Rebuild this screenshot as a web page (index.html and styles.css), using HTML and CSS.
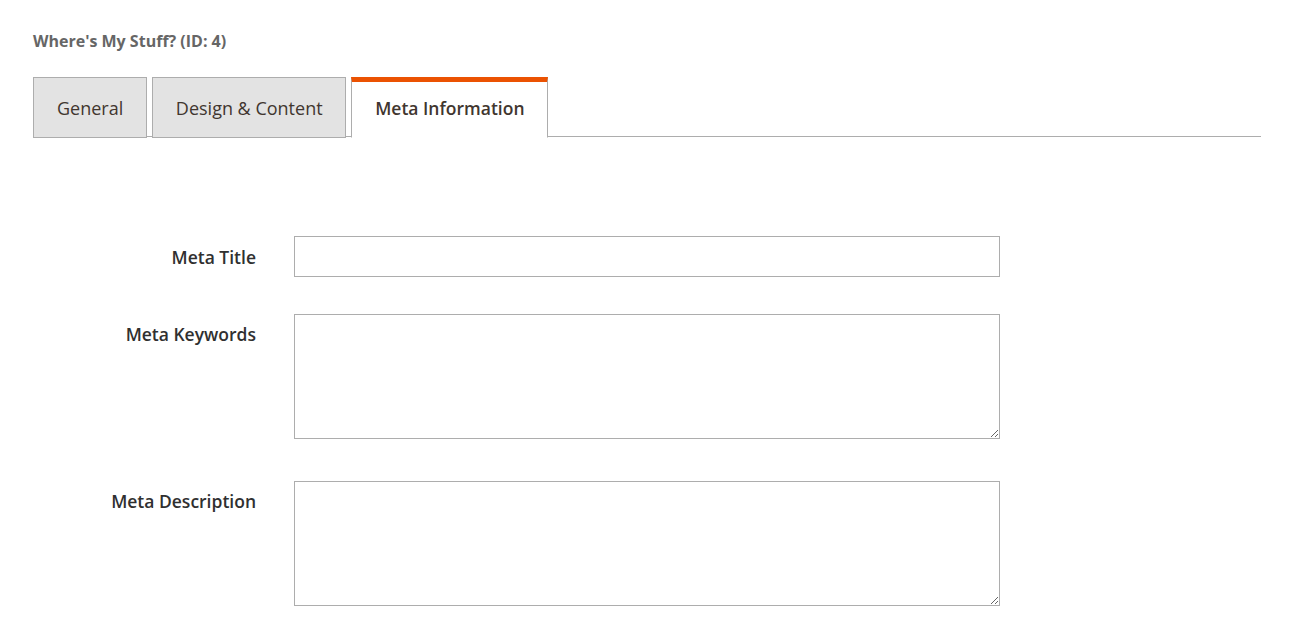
FILE: index.html
```html
<!DOCTYPE html>
<html>
<head>
<meta charset="utf-8">
<link rel="stylesheet" href="styles.css">
</head>
<body>
<div class="page">
  <h1 class="title">Where's My Stuff? (ID: 4)</h1>
  <div class="tabs">
    <div class="tab">General</div>
    <div class="tab">Design &amp; Content</div>
    <div class="tab active">Meta Information</div>
  </div>
  <form class="form">
    <div class="row row-input">
      <label class="label">Meta Title</label>
      <input class="input" type="text">
    </div>
    <div class="row row-area">
      <label class="label">Meta Keywords</label>
      <textarea class="area"></textarea>
    </div>
    <div class="row row-area">
      <label class="label">Meta Description</label>
      <textarea class="area"></textarea>
    </div>
  </form>
</div>
</body>
</html>
```

FILE: styles.css
```css
* { box-sizing: border-box; }
html, body { margin: 0; padding: 0; background: #fff; }
body {
  font-family: "Open Sans", "Noto Sans", sans-serif;
  color: #303030;
}
.page {
  padding: 31px 36px 0 33px;
}
.title {
  margin: 0;
  font-size: 16px;
  font-weight: 700;
  line-height: 20px;
  color: #666;
}
.tabs {
  display: flex;
  gap: 5px;
  margin-top: 26px;
  border-bottom: 1px solid #adadad;
  height: 60px;
}
.tab {
  height: 61px;
  padding: 0 22.6px 0 23px;
  display: flex;
  align-items: center;
  font-size: 18px;
  color: #41362f;
  background: #e3e3e3;
  border: 1px solid #adadad;
}
.tab.active {
  background: #fff;
  border-top: 5px solid #eb5202;
  border-bottom: 1px solid #fff;
  font-size: 17.5px;
  font-weight: 600;
  padding: 0 22px 4px 23px;
}
.form {
  padding-top: 99px;
}
.row {
  display: grid;
  grid-template-columns: 223px 706px;
  column-gap: 38px;
}
.label {
  font-size: 17.5px;
  font-weight: 600;
  text-align: right;
  color: #303030;
  line-height: 24px;
}
.row-input { align-items: center; margin-bottom: 37px; }
.row-area { align-items: start; margin-bottom: 42px; }
.row-area .label { padding-top: 8px; }
.input {
  display: block;
  width: 706px;
  height: 41px;
  border: 1px solid #adadad;
  margin: 0;
  padding: 0 10px;
  font-family: inherit;
  font-size: 14px;
  outline: none;
}
.area {
  display: block;
  width: 706px;
  height: 125px;
  border: 1px solid #adadad;
  margin: 0;
  padding: 8px 10px;
  font-family: inherit;
  font-size: 14px;
  outline: none;
}
```
